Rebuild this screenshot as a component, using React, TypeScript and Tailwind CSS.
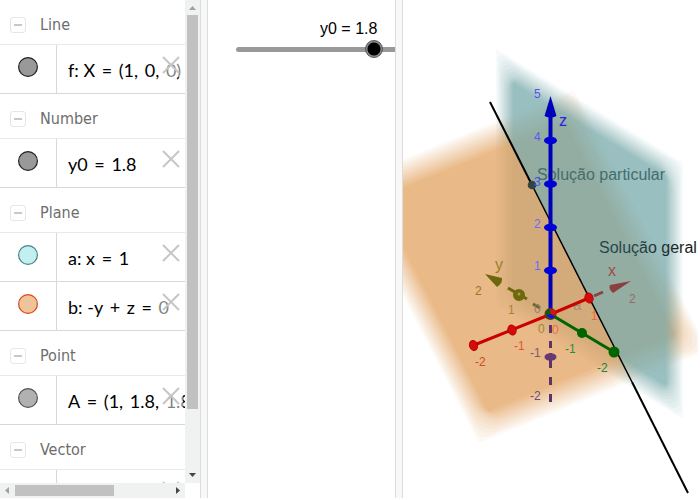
import React, { useState } from "react";

type Item = { text: string; fill: string; stroke: string };
type Group = { name: string; items: Item[] };

const groups: Group[] = [
  { name: "Line", items: [{ text: "f: X = (1, 0, 0)", fill: "#999999", stroke: "#222222" }] },
  { name: "Number", items: [{ text: "y0 = 1.8", fill: "#999999", stroke: "#222222" }] },
  {
    name: "Plane",
    items: [
      { text: "a: x = 1", fill: "#c2f0f0", stroke: "#4f8080" },
      { text: "b: -y + z = 0", fill: "#f0c49a", stroke: "#d84a1b" },
    ],
  },
  { name: "Point", items: [{ text: "A = (1, 1.8, 1.8)", fill: "#b1b1b1", stroke: "#555555" }] },
  { name: "Vector", items: [{ text: "u", fill: "#ffffff", stroke: "#ffffff" }] },
];

// Math spacing: a little more room round operators and after commas.
function Formula({ text }: { text: string }) {
  return (
    <>
      {text.split(/( [=+] |, )/).map((part, i) => {
        if (part === ", ") return <span key={i} className="pr-0.5">{part}</span>;
        if (part === " = " || part === " + ") return <span key={i} className="px-0.5">{part}</span>;
        return part;
      })}
    </>
  );
}

function AlgebraRow({ item }: { item: Item }) {
  return (
    <li className="relative flex h-[49px] border-b border-[#d8d8d8]">
      <div className="flex w-[57px] shrink-0 justify-center border-r border-[#d8d8d8] pt-3">
        <button aria-label={"Show or hide " + item.text} className="h-5 w-5">
          <svg viewBox="0 0 20 20" className="h-5 w-5">
            <circle cx="10" cy="10" r="9.4" fill={item.fill} stroke={item.stroke} strokeWidth="1.2" />
          </svg>
        </button>
      </div>
      <span className="whitespace-pre pl-[11px] pt-[13px] font-[Lato,sans-serif] text-[18px] leading-6 text-black">
        <Formula text={item.text} />
      </span>
      <button aria-label={"Delete " + item.text} className="absolute right-0.5 top-2 h-6 w-6 bg-white/50">
        <svg viewBox="0 0 24 24" className="h-6 w-6">
          <path d="M4 4 L20 20 M20 4 L4 20" stroke="#c6c6c6" strokeWidth="2" fill="none" />
        </svg>
      </button>
    </li>
  );
}

function AlgebraView() {
  return (
    <aside className="flex w-[201px] shrink-0 flex-col border-r border-[#dcdcdc]">
      <div className="flex min-h-0 flex-1">
        <div className="w-[185px] overflow-hidden">
          {groups.map((g) => (
            <section key={g.name}>
              <h2 className="flex h-[45px] items-center border-b border-[#e9e9e9] pt-1.5 font-['DejaVu_Sans_Condensed','DejaVu_Sans',sans-serif] text-[16px] text-[#6d6d6d]">
                <button
                  aria-label={"Collapse " + g.name}
                  className="ml-2.5 mr-3.5 flex h-4 w-4 items-center justify-center rounded-[3px] border border-[#e6e6e6]"
                >
                  <span className="h-0.5 w-2 bg-[#c8c8c8]" />
                </button>
                {g.name}
              </h2>
              <ul>
                {g.items.map((i) => (
                  <AlgebraRow key={i.text} item={i} />
                ))}
              </ul>
            </section>
          ))}
        </div>
        <div className="flex w-[15px] flex-col items-center bg-[#f0f2f1]">
          <svg viewBox="0 0 15 15" className="h-[15px] w-[15px] shrink-0">
            <path d="M4 10 L7.500 6 L11 10 Z" fill="#a0a0a0" />
          </svg>
          <div className="w-full flex-1">
            <div className="ml-0.5 h-[87%] w-[11px] bg-[#c1c1c1]" />
          </div>
          <svg viewBox="0 0 15 15" className="h-[15px] w-[15px] shrink-0">
            <path d="M4 5 L11 5 L7.500 9 Z" fill="#454545" />
          </svg>
        </div>
      </div>
      <div className="flex h-[15px] w-[185px] items-center bg-[#f0f2f1]">
        <svg viewBox="0 0 15 15" className="h-[15px] w-[15px] shrink-0">
          <path d="M9 4 L5 7.500 L9 11 Z" fill="#a0a0a0" />
        </svg>
        <div className="flex-1">
          <div className="h-[11px] w-[99px] bg-[#c1c1c1]" />
        </div>
        <svg viewBox="0 0 15 15" className="h-[15px] w-[15px] shrink-0">
          <path d="M6 4 L10 7.500 L6 11 Z" fill="#454545" />
        </svg>
      </div>
    </aside>
  );
}

function Gutter() {
  return <div className="w-[7px] shrink-0 border-r border-[#dcdcdc] bg-[#f8f8f8]" />;
}

function SliderView() {
  const [y0, setY0] = useState(1.8);
  return (
    <main className="w-[188px] shrink-0 overflow-hidden border-r border-[#dcdcdc] pl-7 pt-5 font-['Liberation_Sans',Arial,sans-serif]">
      <label htmlFor="y0" className="block pl-[84px] pt-px text-[16px] leading-4 text-black">
        y0 = {y0}
      </label>
      <input
        id="y0"
        type="range"
        min={-5}
        max={5}
        step={0.1}
        value={y0}
        onChange={(e) => setY0(Number(e.target.value))}
        className="mt-[3px] block h-[18px] w-[208px] appearance-none bg-transparent [&::-webkit-slider-runnable-track]:h-[5px] [&::-webkit-slider-runnable-track]:rounded-full [&::-webkit-slider-runnable-track]:bg-[#999999] [&::-webkit-slider-thumb]:-mt-[7px] [&::-webkit-slider-thumb]:h-[18px] [&::-webkit-slider-thumb]:w-[18px] [&::-webkit-slider-thumb]:appearance-none [&::-webkit-slider-thumb]:rounded-full [&::-webkit-slider-thumb]:border [&::-webkit-slider-thumb]:border-[#555555] [&::-webkit-slider-thumb]:bg-[radial-gradient(circle,#000000_6px,#8c8c8c_7px)]"
      />
    </main>
  );
}

const STEPS = 12;

// A parallelogram whose corners are rounded off by the fraction t of each side.
function roundedPath(points: number[][], t: number) {
  const mix = (a: number[], b: number[]) => [a[0] + (b[0] - a[0]) * t, a[1] + (b[1] - a[1]) * t];
  const parts = points.map((p, i) => {
    const start = mix(p, points[(i + 3) % 4]);
    const end = mix(p, points[(i + 1) % 4]);
    return (i === 0 ? "M" : "L") + start.join(" ") + " Q" + p.join(" ") + " " + end.join(" ");
  });
  return parts.join(" ") + " Z";
}

// A plane that fades out towards its edges: nested copies, each a bit smaller.
function FadingPlane({ points, color, alpha }: { points: number[][]; color: string; alpha: number }) {
  const cx = (points[0][0] + points[2][0]) / 2;
  const cy = (points[0][1] + points[2][1]) / 2;
  return (
    <g fill={color}>
      {Array.from({ length: STEPS }, (_, i) => {
        const scale = 1 - (0.18 * i) / (STEPS - 1);
        const before = (alpha * i) / STEPS;
        const after = (alpha * (i + 1)) / STEPS;
        const scaled = points.map(([x, y]) => [cx + (x - cx) * scale, cy + (y - cy) * scale]);
        const bulge = Math.sin((Math.PI * i) / (STEPS - 1));
        return (
          <path key={i} fillOpacity={(after - before) / (1 - before)} d={roundedPath(scaled, 0.01 + 0.1 * bulge)} />
        );
      })}
    </g>
  );
}

const tealPlane = [[496, 49], [683, 163], [683, 419], [496, 305]];
const orangePlane = [[345, 183], [574, 90], [708, 350], [479, 443]];

type Mark = [string, number, number, string];
const marks: Mark[] = [
  ["5", 534, 98, "#5a50f0"],
  ["4", 534, 141, "#5a5af0"],
  ["3", 534, 186, "#4a50e8"],
  ["2", 534, 228, "#6b6bf5"],
  ["1", 534, 270, "#6b6bf5"],
  ["0", 534, 313, "#957b7d"],
  ["-1", 530, 357, "#735878"],
  ["-2", 530, 400, "#664c7c"],
  ["2", 475, 295, "#8f7a2c"],
  ["1", 508, 314, "#9b853f"],
  ["0", 538, 333, "#9c8636"],
  ["0", 552, 334, "#f06a3c"],
  ["1", 591, 320, "#ef6840"],
  ["2", 629, 303, "#95696a"],
  ["-1", 514, 350, "#dc5632"],
  ["-2", 475, 366, "#d04a22"],
  ["-1", 565, 353, "#2c8a3c"],
  ["-2", 597, 372, "#25803a"],
];

function Planes() {
  return (
    <g>
      <g clipPath="url(#leftOfLine)">
        <FadingPlane points={tealPlane} color="#7eb0b1" alpha={0.76} />
        <FadingPlane points={orangePlane} color="#e6a869" alpha={0.78} />
      </g>
      <g clipPath="url(#rightOfLine)">
        <FadingPlane points={orangePlane} color="#e6a869" alpha={0.78} />
        <FadingPlane points={tealPlane} color="#7cadae" alpha={0.76} />
      </g>
    </g>
  );
}

function GraphicsView() {
  return (
    <section aria-label="3D Graphics" className="min-w-0 flex-1 overflow-hidden">
      <svg
        width="295"
        height="498"
        viewBox="403 0 295 498"
        className="block font-['Liberation_Sans',Arial,sans-serif]"
      >
        <defs>
          <clipPath id="leftOfLine">
            <path d="M403 0 H438.400 L690.500 498 H403 Z" />
          </clipPath>
          <clipPath id="rightOfLine">
            <path d="M438.400 0 H698 V498 H690.500 Z" />
          </clipPath>
          <linearGradient id="label" gradientUnits="userSpaceOnUse" x1="630" y1="0" x2="690" y2="0">
            <stop offset="0" stopColor="#234648" />
            <stop offset="1" stopColor="#181c1c" />
          </linearGradient>
        </defs>
        <Planes />

        <text x="537" y="180" fontSize="16" fill="#446d6d">Solução particular</text>
        <text x="599" y="253" fontSize="16" fill="url(#label)">Solução geral</text>
        <text x="573" y="310" fontSize="15" fill="#a08c78">a</text>

        <path d="M490 102 L532 185" stroke="#000" strokeWidth="2" />
        <path d="M532 185 L632 382" stroke="#000" strokeWidth="1.500" />
        <path d="M632 382 L688 493" stroke="#000" strokeWidth="2" />
        <circle cx="532" cy="185" r="4.300" fill="#34433f" />

        <g stroke="#5c336b" strokeWidth="3">
          <path d="M550.500 325 V333 M550.500 341 V348 M550.500 353 V368 M550.500 377 V385 M550.500 394 V402" />
        </g>
        <ellipse cx="550.500" cy="357" rx="6" ry="3.800" fill="#663973" />

        <g stroke="#6d680b" strokeWidth="3" fill="#6d680b">
          <path d="M533 304 L540 308 M508 288 L527 299" />
          <circle cx="519" cy="295" r="4.500" />
          <path d="M485 274 L502 278 Q503 283 497 287 Z" stroke="none" />
        </g>
        <circle cx="519" cy="294" r="1.500" fill="#ad974e" />

        <path d="M594 296 L603 292" stroke="#8a4444" strokeWidth="3" />
        <path d="M631 281 L610 285 Q608 289 613 293 Z" fill="#8a4040" />

        <path d="M473 345.500 L550 314.500 L589 298" stroke="#cb0000" strokeWidth="3" fill="none" />
        <g fill="#d40b08" stroke="#b50000" strokeWidth="1">
          <ellipse cx="473.500" cy="345.500" rx="4" ry="5" transform="rotate(-20 473.500 345.500)" />
          <ellipse cx="512" cy="330" rx="4" ry="5" transform="rotate(-20 512 330)" />
          <ellipse cx="589" cy="298" rx="4" ry="5" transform="rotate(-20 589 298)" />
        </g>

        <path d="M550 314 L614 352" stroke="#006400" strokeWidth="3" />
        <circle cx="582" cy="333" r="5" fill="#006400" />
        <circle cx="614" cy="352" r="5.500" fill="#006400" />

        <path d="M550.500 312 V112" stroke="#0000bb" strokeWidth="4" />
        <path d="M550.500 96 L556.500 116 Q550.500 119.500 544.500 116 Z" fill="#0000bb" />
        <g fill="#0000d8">
          <ellipse cx="550.500" cy="140.500" rx="6.500" ry="3.800" />
          <ellipse cx="550.500" cy="184" rx="6.500" ry="3.800" />
          <ellipse cx="550.500" cy="227.500" rx="6.500" ry="3.800" />
          <ellipse cx="550.500" cy="270.500" rx="6.500" ry="3.800" />
        </g>
        <circle cx="550.500" cy="314" r="6" fill="#4a4410" />
        <path d="M545 313 L550 309 L550 315 Z" fill="#006400" />
        <path d="M550 309 Q556 309 556.500 314 L551 316 Z" fill="#dd1010" />
        <path d="M546 315 L551 314 L555 317 L551 319 Z" fill="#1414e0" />

        <g fontSize="12">
          {marks.map(([t, x, y, c], i) => (
            <text key={i} x={x} y={y} fill={c}>{t}</text>
          ))}
        </g>
        <g fontSize="16">
          <text x="559" y="126" fill="#2c20e0">z</text>
          <text x="495" y="270" fill="#93812b">y</text>
          <text x="608" y="276" fill="#9b4d4b">x</text>
        </g>
      </svg>
    </section>
  );
}

export default function App() {
  return (
    <div className="flex h-screen overflow-hidden bg-white pb-0.5">
      <AlgebraView />
      <Gutter />
      <SliderView />
      <Gutter />
      <GraphicsView />
    </div>
  );
}
